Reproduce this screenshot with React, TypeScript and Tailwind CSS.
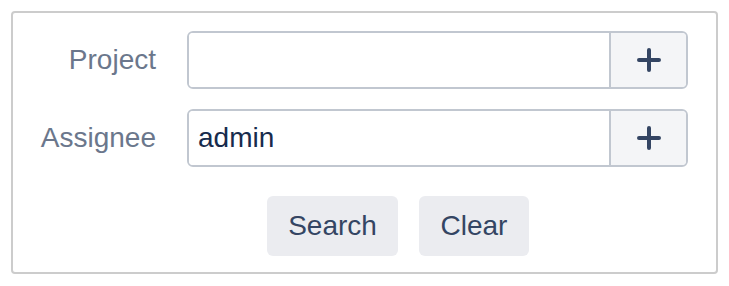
import React from 'react';

const PlusIcon = () => (
  <svg width="24" height="24" viewBox="0 0 24 24" fill="none" stroke="#344563" strokeWidth={4} strokeLinecap="round">
    <path d="M12 2v20M2 12h20" />
  </svg>
);

const PickerField = ({ value = '' }: { value?: string }) => (
  <div className="flex h-[58px] w-[501px] rounded-[6px] border-2 border-[#c1c7d0] overflow-hidden">
    <div className="flex-1 flex items-center pl-[9px] bg-white text-[28px] text-[#172b4d]">{value}</div>
    <button type="button" className="w-[77px] flex items-center justify-center border-l-2 border-[#c1c7d0] bg-[#f4f5f7]">
      <PlusIcon />
    </button>
  </div>
);

export default function App() {
  return (
    <div className="p-[11px] bg-white" style={{ fontFamily: '"Liberation Sans", Arial, sans-serif' }}>
      <div className="w-[707px] h-[263px] border-2 border-[#cccccc] rounded-[4px] pt-[18px]">
        <div className="flex flex-col gap-[20px]">
          <div className="flex items-center">
            <div className="w-[143px] text-right text-[28px] text-[#6b778c]">Project</div>
            <div className="ml-[31px]">
              <PickerField />
            </div>
          </div>
          <div className="flex items-center">
            <div className="w-[143px] text-right text-[28px] text-[#6b778c]">Assignee</div>
            <div className="ml-[31px]">
              <PickerField value="admin" />
            </div>
          </div>
        </div>
        <div className="flex gap-[21px] mt-[29px] ml-[254px]">
          <button type="button" className="h-[60px] w-[131px] rounded-[6px] bg-[#ebecf0] text-[28px] text-[#344563]">Search</button>
          <button type="button" className="h-[60px] w-[110px] rounded-[6px] bg-[#ebecf0] text-[28px] text-[#344563]">Clear</button>
        </div>
      </div>
    </div>
  );
}
